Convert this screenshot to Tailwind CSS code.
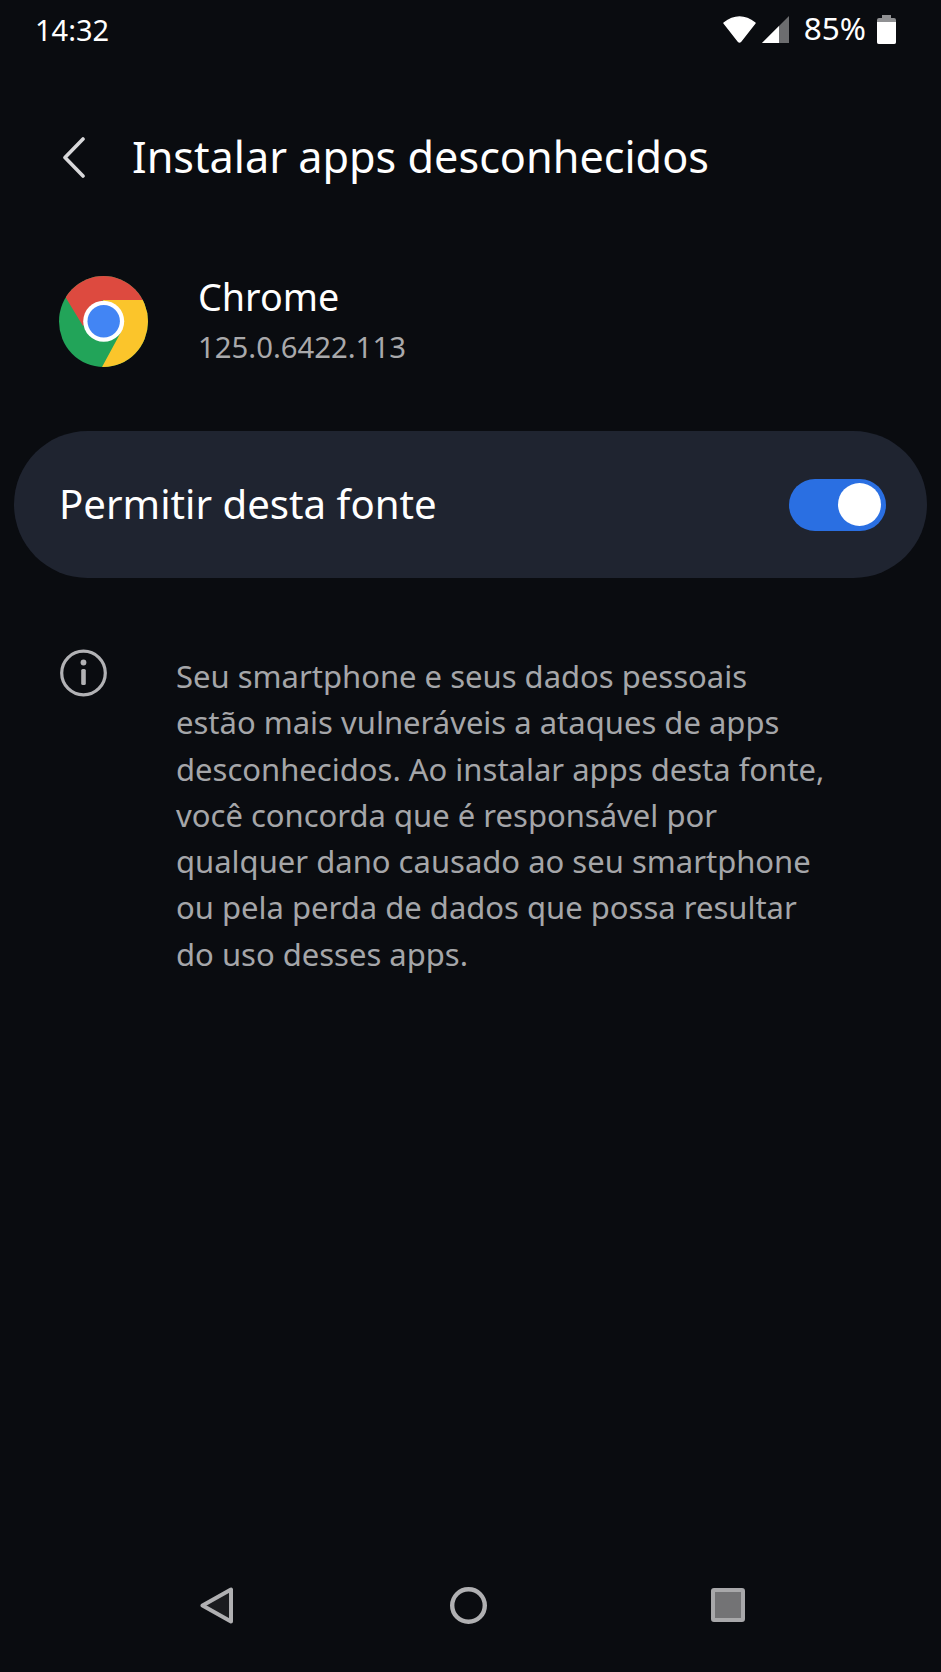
<!DOCTYPE html>
<html lang="pt-BR"><head><meta charset="utf-8">
<script src="https://cdn.jsdelivr.net/npm/@tailwindcss/browser@4"></script>
</head>
<body class="m-0 bg-[#0a0c10]">
<div class="w-[941px] h-[1672px] flex flex-col bg-[#0a0c10] text-white font-['Noto_Sans',sans-serif] overflow-hidden">
  <!-- status bar -->
  <div class="h-[58px] flex items-center justify-between pl-[35px] pr-[45px] text-[29px]">
    <span class="leading-none">14:32</span>
    <div class="flex items-center">
      <svg class="w-[33px] h-[27px]" viewBox="0 0 33 27"><path d="M1 7Q16.5 -5 32 7L17.5 25.5Q16.5 26.5 15.5 25.5Z" fill="#fff" stroke="#fff" stroke-width="1.5" stroke-linejoin="round"/></svg>
      <svg class="w-[27px] h-[27px] ml-[6px]" viewBox="0 0 27 27"><path d="M0 27L27 0V27Z" fill="#fff" fill-opacity=".4"/><path d="M0 27L17 10V27Z" fill="#fff"/></svg>
      <span class="leading-none ml-[15px] text-[31.5px] -translate-y-px">85%</span>
      <svg class="w-[19px] h-[29px] ml-[11px]" viewBox="0 0 19 29"><path d="M5 0H14V3H17Q19 3 19 5V27Q19 29 17 29H2Q0 29 0 27V5Q0 3 2 3H5Z" fill="#fff" fill-opacity=".55"/><path d="M0 7H19V27Q19 29 17 29H2Q0 29 0 27Z" fill="#fff"/></svg>
    </div>
  </div>
  <!-- header -->
  <div class="h-[84px] mt-[57px] flex items-center pl-[62px]">
    <svg class="w-[23px] h-[41px]" viewBox="0 0 23 41" fill="none"><path d="M21 2L3 20.5L21 39" stroke="#d8d8da" stroke-width="3.6" stroke-linecap="round" stroke-linejoin="round"/></svg>
    <h1 class="ml-[47px] text-[43.2px] font-normal leading-none">Instalar apps desconhecidos</h1>
  </div>
  <!-- app -->
  <div class="mt-[77px] h-[91px] flex items-center pl-[59px]">
    <svg class="w-[89px] h-[91px]" viewBox="0 0 89 91">
      <defs><clipPath id="c"><ellipse cx="44.5" cy="45.5" rx="44.5" ry="45.5"/></clipPath></defs>
      <g clip-path="url(#c)">
        <rect width="89" height="91" fill="#22a459"/>
        <path d="M7 22L24 50L44 24H89V-2H7Z" fill="#dd4a3f"/>
        <path d="M44 24H89V91H43L62 56Z" fill="#fbc52b"/>
      </g>
      <circle cx="44.7" cy="45.3" r="20.5" fill="#fff"/>
      <circle cx="44.7" cy="45.3" r="16.2" fill="#4285f4"/>
    </svg>
    <div class="ml-[50px] flex flex-col">
      <span class="text-[37.7px] leading-[50px]">Chrome</span>
      <span class="text-[29.3px] leading-[50px] text-[#a9a9ab]">125.0.6422.113</span>
    </div>
  </div>
  <!-- toggle card -->
  <div class="mt-[64px] mx-[14px] h-[147px] rounded-[74px] bg-[#1f2430] flex items-center justify-between pl-[45px] pr-[41px]">
    <span class="text-[40.2px] leading-none">Permitir desta fonte</span>
    <div class="relative w-[97px] h-[52px] rounded-full bg-[#2a6fe2]">
      <div class="absolute right-[5px] top-[4px] w-[43px] h-[43px] rounded-full bg-white"></div>
    </div>
  </div>
  <!-- info -->
  <div class="mt-[71px] flex pl-[60px]">
    <svg class="w-[47px] h-[48px] shrink-0" viewBox="0 0 47 48" fill="none"><circle cx="23.5" cy="24" r="21.8" stroke="#b2b2b5" stroke-width="3.2"/><rect x="21.2" y="20" width="4.6" height="16" rx="1.5" fill="#b2b2b5"/><circle cx="23.5" cy="13.5" r="2.9" fill="#b2b2b5"/></svg>
    <p class="ml-[69px] mt-[4px] w-[700px] text-[31px] leading-[46.3px] text-[#a5a6a9]">Seu smartphone e seus dados pessoais<br>estão mais vulneráveis a ataques de apps<br>desconhecidos. Ao instalar apps desta fonte,<br>você concorda que é responsável por<br>qualquer dano causado ao seu smartphone<br>ou pela perda de dados que possa resultar<br>do uso desses apps.</p>
  </div>
  <!-- nav -->
  <div class="mt-auto mb-[49px] h-[36px] flex items-center pl-[200px]">
    <svg class="w-[33px] h-[37px]" viewBox="0 0 33 37"><path d="M2.5 18.5L31 2.5V34.5Z" fill="#1b1c1f" stroke="#b0b0b2" stroke-width="4" stroke-linejoin="round"/></svg>
    <svg class="w-[37px] h-[37px] ml-[217px]" viewBox="0 0 37 37" fill="none"><circle cx="18.5" cy="18.5" r="16.3" stroke="#b0b0b2" stroke-width="4.4"/></svg>
    <div class="w-[34px] h-[34px] ml-[224px] rounded-[3px] border-[4px] border-[#a8a8aa] bg-[#737375]"></div>
  </div>
</div>
</body></html>
